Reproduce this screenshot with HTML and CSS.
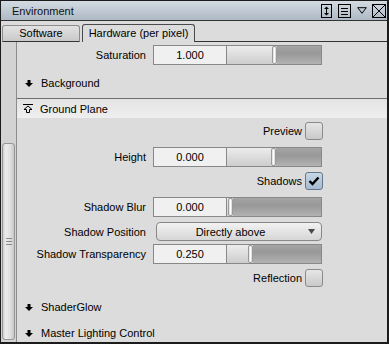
FILE: index.html
```html
<!DOCTYPE html>
<html lang="en">
<head>
  <meta charset="UTF-8" />
  <meta name="viewport" content="width=device-width, initial-scale=1.0" />
  <title>Environment</title>
  <link rel="stylesheet" href="styles.css">
</head>
<body>
  <div class="panel">
    <!-- Title bar -->
    <div class="titlebar">
      <span class="title">Environment</span>
      <div class="title-icons">
        <svg width="11" height="14" viewBox="0 0 11 14">
          <rect x="0.5" y="0.5" width="10" height="13" fill="none" stroke="#000" />
          <line x1="5.5" y1="4" x2="5.5" y2="10" stroke="#000" stroke-width="1" />
          <polygon points="3,5 5.5,2.5 8,5" fill="#000" />
          <polygon points="3,9 5.5,11.5 8,9" fill="#000" />
        </svg>
        <svg width="13" height="14" viewBox="0 0 13 14">
          <rect x="0.5" y="0.5" width="12" height="13" fill="none" stroke="#000" />
          <line x1="3" y1="4.5" x2="10" y2="4.5" stroke="#000" />
          <line x1="3" y1="7.5" x2="10" y2="7.5" stroke="#000" />
          <line x1="3" y1="10.5" x2="10" y2="10.5" stroke="#000" />
        </svg>
        <svg class="tri" width="10" height="7" viewBox="0 0 10 7">
          <polygon points="0.7,0.7 9.3,0.7 5,6.3" fill="none" stroke="#000" />
        </svg>
        <svg width="14" height="14" viewBox="0 0 14 14">
          <rect x="0.5" y="0.5" width="13" height="13" fill="none" stroke="#000" />
          <line x1="1" y1="1" x2="13" y2="13" stroke="#000" />
          <line x1="13" y1="1" x2="1" y2="13" stroke="#000" />
        </svg>
      </div>
    </div>

    <!-- Tabs -->
    <div class="tabs">
      <div class="tab">Software</div>
      <div class="tab active">Hardware (per pixel)</div>
      <div class="tab-rest"></div>
    </div>

    <div class="main">
      <div class="scrollbar">
        <div class="thumb"><span class="grip"></span></div>
      </div>

      <div class="content">
        <div class="field-row mt3">
          <span class="label">Saturation</span>
          <span class="num">1.000</span>
          <div class="slider">
            <span class="fill" style="width: 45px;"></span>
            <span class="knob"></span>
            <span class="track"></span>
          </div>
        </div>

        <div class="section mt8">
          <svg class="arrow" width="8" height="7" viewBox="0 0 8 7">
            <polygon points="2.5,0 5.5,0 5.5,3 8,3 4,7 0,3 2.5,3" fill="#000" />
          </svg>
          <span>Background</span>
        </div>

        <div class="divider"></div>
        <div class="section open">
          <svg class="arrow" width="10" height="9" viewBox="0 0 10 9">
            <line x1="0" y1="0.5" x2="10" y2="0.5" stroke="#000" />
            <polygon points="5,2 9,5.5 6.5,5.5 6.5,8.5 3.5,8.5 3.5,5.5 1,5.5" fill="none" stroke="#000" stroke-width="1" />
          </svg>
          <span>Ground Plane</span>
        </div>

        <div class="check-row mt4">
          <span class="check-label">Preview</span>
          <span class="checkbox"></span>
        </div>

        <div class="field-row mt7">
          <span class="label">Height</span>
          <span class="num">0.000</span>
          <div class="slider">
            <span class="fill" style="width: 44px;"></span>
            <span class="knob"></span>
            <span class="track"></span>
          </div>
        </div>

        <div class="check-row mt5">
          <span class="check-label">Shadows</span>
          <span class="checkbox checked">
            <svg width="12" height="10" viewBox="0 0 12 10">
              <polyline points="1.5,5 4.5,8 10.5,1.5" fill="none" stroke="#000" stroke-width="2.4" />
            </svg>
          </span>
        </div>

        <div class="field-row mt7">
          <span class="label">Shadow Blur</span>
          <span class="num">0.000</span>
          <div class="slider">
            <span class="fill" style="width: 1px;"></span>
            <span class="knob"></span>
            <span class="track"></span>
          </div>
        </div>

        <div class="field-row select-row mt5">
          <span class="label">Shadow Position</span>
          <div class="select">
            <span class="select-text">Directly above</span>
            <svg class="select-arrow" width="7" height="5" viewBox="0 0 7 5">
              <polygon points="0,0 7,0 3.5,5" fill="#4a4a4a" />
            </svg>
          </div>
        </div>

        <div class="field-row mt3">
          <span class="label">Shadow Transparency</span>
          <span class="num">0.250</span>
          <div class="slider">
            <span class="fill" style="width: 21px;"></span>
            <span class="knob"></span>
            <span class="track"></span>
          </div>
        </div>

        <div class="check-row mt5">
          <span class="check-label">Reflection</span>
          <span class="checkbox"></span>
        </div>

        <div class="section mt10">
          <svg class="arrow" width="8" height="7" viewBox="0 0 8 7">
            <polygon points="2.5,0 5.5,0 5.5,3 8,3 4,7 0,3 2.5,3" fill="#000" />
          </svg>
          <span>ShaderGlow</span>
        </div>

        <div class="section mt6">
          <svg class="arrow" width="8" height="7" viewBox="0 0 8 7">
            <polygon points="2.5,0 5.5,0 5.5,3 8,3 4,7 0,3 2.5,3" fill="#000" />
          </svg>
          <span>Master Lighting Control</span>
        </div>
      </div>
    </div>
  </div>
</body>
</html>
```

FILE: styles.css
```css
body {
  margin: 0;
  background: #dcdcdc;
  font-family: "Liberation Sans", Arial, sans-serif;
  font-size: 11px;
  color: #000;
}
.panel {
  width: 389px;
  height: 344px;
  box-sizing: border-box;
  border: 1px solid #1c1c1c;
  border-right-width: 2px;
  border-bottom-width: 2px;
  display: flex;
  flex-direction: column;
  overflow: hidden;
  background: #dcdcdc;
}

/* title bar */
.titlebar {
  height: 19px;
  flex: none;
  display: flex;
  align-items: center;
  padding-left: 11px;
  border-bottom: 1px solid #333;
  background: linear-gradient(#d4dbe2, #adb9c5);
}
.title {
  color: #111;
}
.title-icons {
  margin-left: auto;
  display: flex;
  align-items: center;
  gap: 6px;
  padding-right: 1px;
}
.title-icons svg {
  display: block;
}
.title-icons .tri {
  margin-right: -1px;
}

/* tabs */
.tabs {
  height: 21px;
  flex: none;
  display: flex;
  align-items: flex-end;
}
.tab {
  width: 78px;
  height: 17px;
  box-sizing: border-box;
  margin-left: 1px;
  border: 1px solid #8c8c8c;
  border-bottom-color: #333;
  border-radius: 3px 3px 0 0;
  background: linear-gradient(#e2e2e2, #c9c9c9);
  text-align: center;
  line-height: 15px;
}
.tab.active {
  width: 113px;
  height: 18px;
  margin-left: 2px;
  border-color: #4a4a4a;
  border-bottom: none;
  background: #dcdcdc;
  line-height: 17px;
}
.tab-rest {
  flex: 1;
  border-bottom: 1px solid #333;
}

/* body */
.main {
  flex: 1;
  display: flex;
  min-height: 0;
}
.scrollbar {
  width: 16px;
  flex: none;
  box-sizing: border-box;
  border-right: 1px solid #8c8c8c;
  background: #d3d3d3;
  padding-top: 101px;
}
.thumb {
  width: 13px;
  height: 197px;
  box-sizing: border-box;
  margin-left: 1px;
  border: 1px solid #969696;
  border-radius: 3px;
  background: linear-gradient(to right, #cfcfcf, #ededed 25%, #dddddd 70%, #c6c6c6);
  display: flex;
  align-items: center;
  justify-content: center;
}
.grip {
  width: 6px;
  height: 7px;
  background: linear-gradient(#8a8a8a 1px, transparent 1px) 0 0 / 100% 3px repeat-y;
}

.content {
  flex: 1;
  display: flex;
  flex-direction: column;
}
.mt3 { margin-top: 3px; }
.mt4 { margin-top: 4px; }
.mt5 { margin-top: 5px; }
.mt6 { margin-top: 6px; }
.mt7 { margin-top: 7px; }
.mt8 { margin-top: 8px; }
.mt10 { margin-top: 10px; }

/* numeric field + slider */
.field-row {
  display: flex;
  align-items: center;
  height: 20px;
  flex: none;
}
.label {
  width: 136px;
  box-sizing: border-box;
  padding-right: 7px;
  text-align: right;
}
.num {
  width: 74px;
  height: 20px;
  box-sizing: border-box;
  border: 1px solid #888;
  background: #f0f0f0;
  text-align: center;
  line-height: 18px;
}
.slider {
  width: 95px;
  height: 20px;
  box-sizing: border-box;
  border: 1px solid #888;
  border-left: none;
  display: flex;
}
.fill {
  background: linear-gradient(#ececec, #cdcdcd);
}
.knob {
  width: 5px;
  box-sizing: border-box;
  border: 1px solid #9a9a9a;
  border-radius: 2px;
  background: linear-gradient(to right, #d8d8d8, #ffffff 50%, #d0d0d0);
}
.track {
  flex: 1;
  background: linear-gradient(#a5a5a5, #989898 40%, #b2b2b2);
}

/* dropdown */
.select-row {
  height: 19px;
}
.select {
  width: 166px;
  height: 19px;
  box-sizing: border-box;
  margin-left: 3px;
  border: 1px solid #888;
  border-radius: 4px;
  background: linear-gradient(#f2f2f2, #d6d6d6);
  display: flex;
  align-items: center;
}
.select-text {
  flex: 1;
  text-align: center;
}
.select-arrow {
  margin: 0 6px 0 4px;
}

/* checkboxes */
.check-row {
  display: flex;
  justify-content: flex-end;
  align-items: center;
  height: 18px;
  flex: none;
  padding-right: 64px;
}
.check-label {
  margin-right: 3px;
}
.checkbox {
  width: 18px;
  height: 18px;
  box-sizing: border-box;
  border: 1px solid #8a8a8a;
  border-radius: 3px;
  background: linear-gradient(#e6e6e6, #c9c9c9);
  display: flex;
  align-items: center;
  justify-content: center;
}
.checkbox.checked {
  border-color: #65768a;
  background: linear-gradient(#c7d6e4, #a6bbd0);
}

/* collapsible sections */
.section {
  display: flex;
  align-items: center;
  height: 20px;
  flex: none;
  padding-left: 7px;
}
.section .arrow {
  width: 10px;
  margin-right: 7px;
}
.divider {
  margin-top: 5px;
  border-top: 1px solid #6e6e6e;
}
.section.open {
  height: 19px;
  background: linear-gradient(#e3e3e3, #efefef);
  padding-left: 6px;
}
```
